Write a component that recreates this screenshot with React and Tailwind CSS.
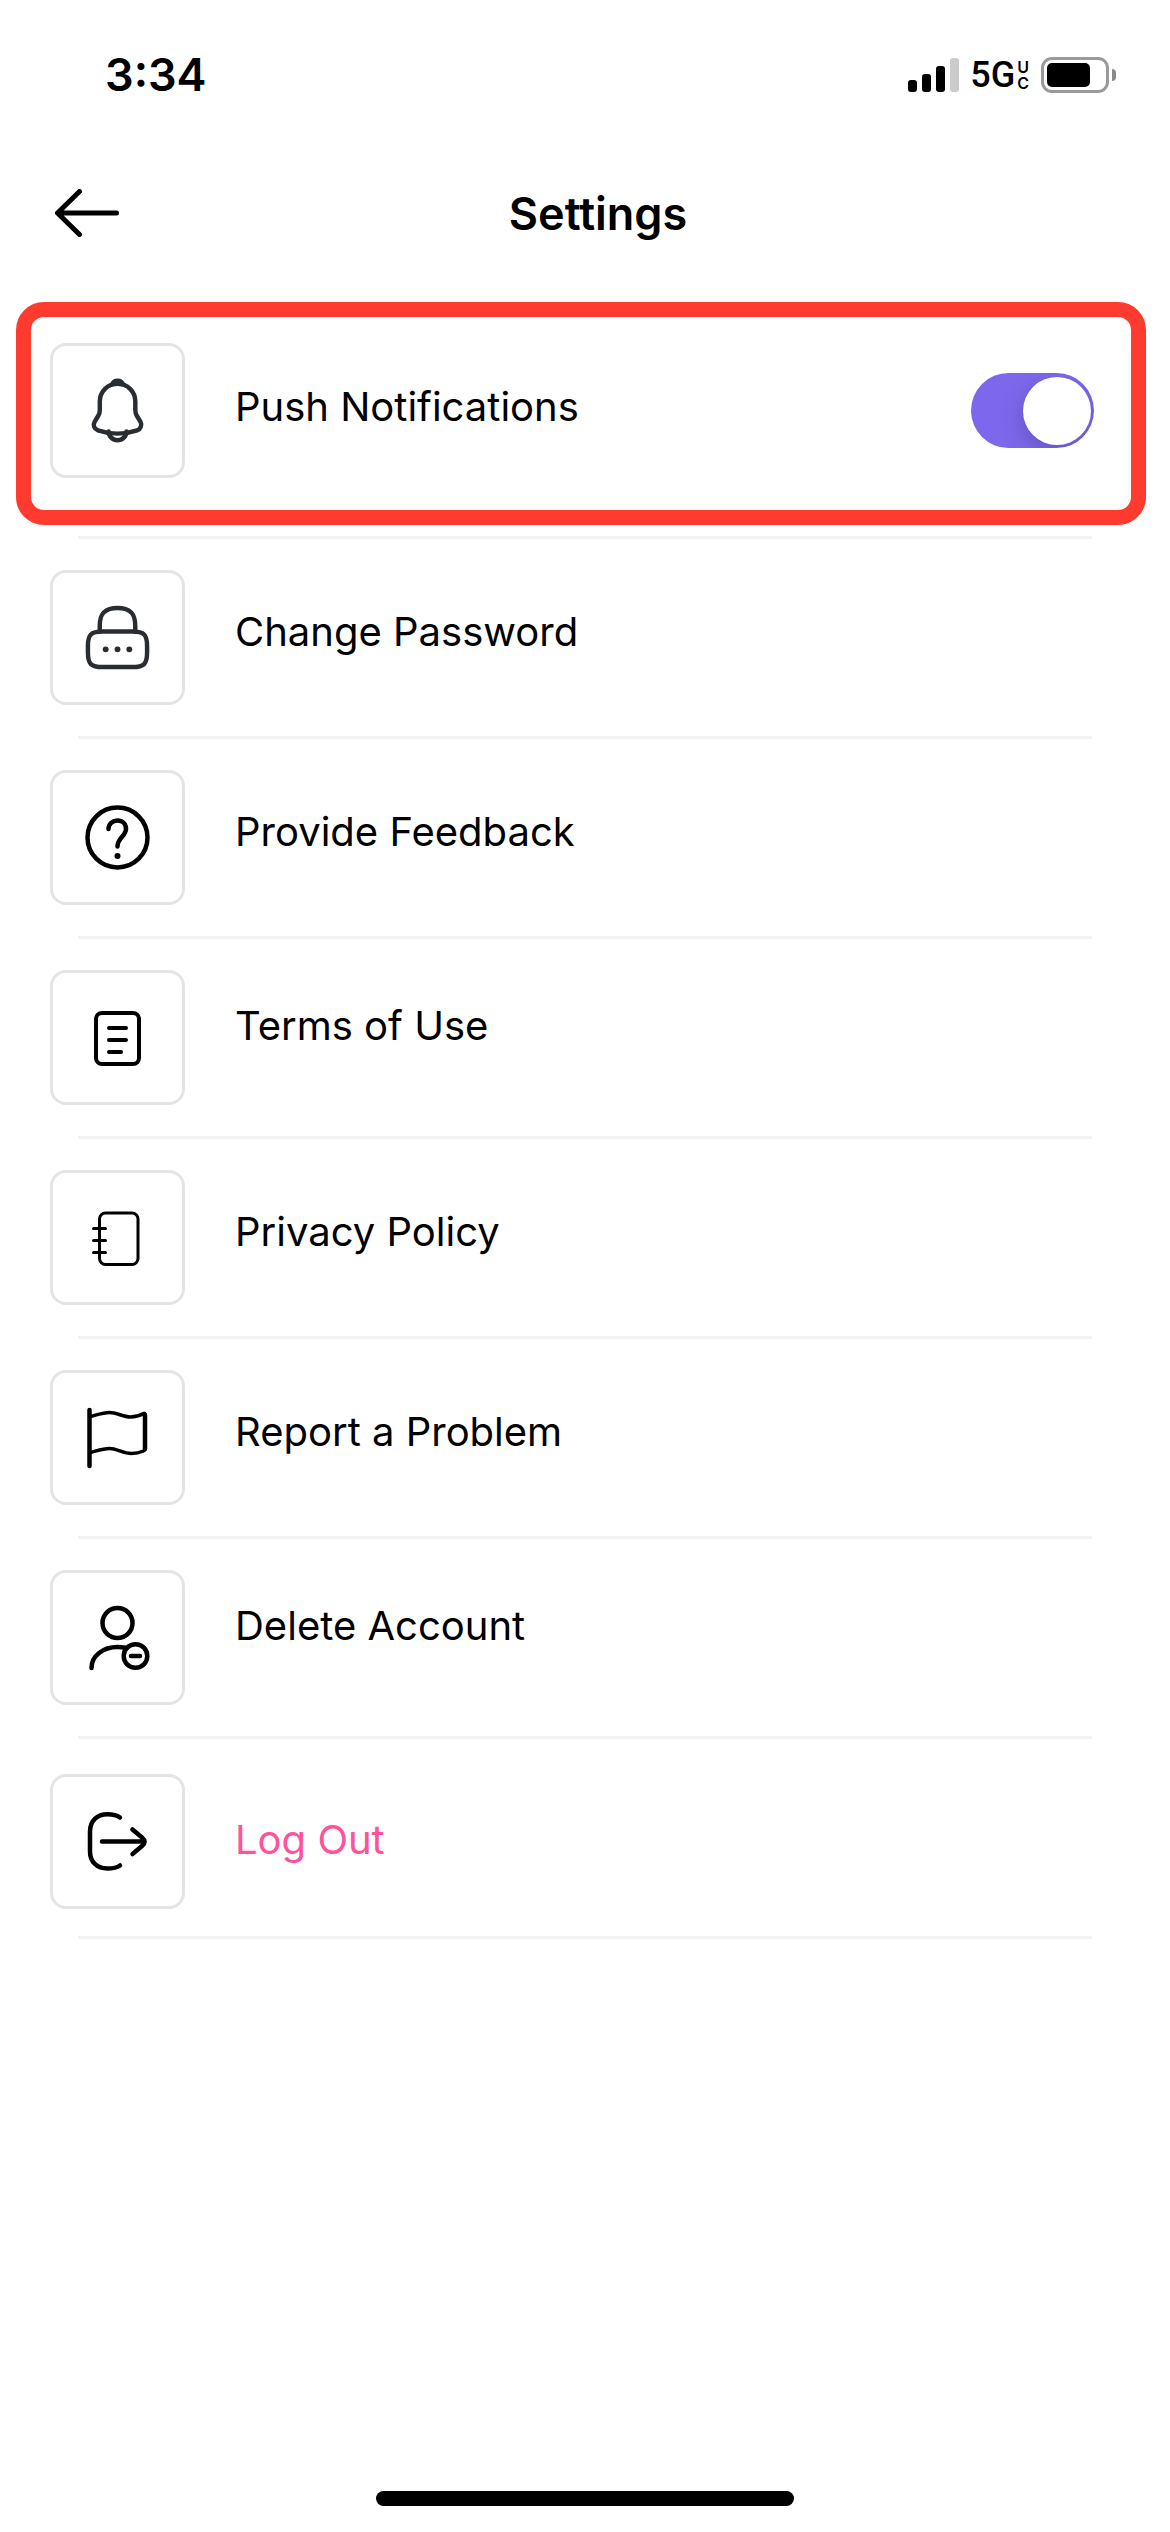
import React, { useState } from "react";

const ICON = "size-[71px] shrink-0";

function BellIcon() {
  return (
    <svg className={ICON} viewBox="0 0 24 24" fill="none" stroke="#292D32" strokeWidth="1.5" strokeLinecap="round">
      <path d="M12.02 2.91c-3.31 0-6 2.69-6 6v2.89c0 .61-.26 1.54-.57 2.06L4.3 15.77c-.71 1.18-.22 2.49 1.08 2.93 4.31 1.44 8.96 1.44 13.27 0 1.21-.4 1.74-1.83 1.08-2.93l-1.15-1.91c-.3-.52-.56-1.45-.56-2.06V8.91c0-3.3-2.7-6-6-6z" />
      <path d="M13.87 3.2a6.754 6.754 0 0 0-3.7 0c.29-.74 1.01-1.26 1.85-1.26.84 0 1.56.52 1.85 1.26z" fill="#292D32" />
      <path d="M15.02 19.06c0 1.65-1.35 3-3 3-.82 0-1.58-.34-2.12-.88a3.01 3.01 0 0 1-.88-2.12" />
    </svg>
  );
}

function LockIcon() {
  return (
    <svg className={ICON} viewBox="0 0 24 24" fill="none" stroke="#292D32" strokeWidth="1.5" strokeLinecap="round" strokeLinejoin="round">
      <path d="M6 10V8c0-3.31 1-6 6-6s6 2.69 6 6v2" />
      <path d="M17 22H7c-4 0-5-1-5-5v-2c0-4 1-5 5-5h10c4 0 5 1 5 5v2c0 4-1 5-5 5z" />
      <path d="M15.996 16h.009M11.995 16h.01M7.995 16h.008" strokeWidth="2" />
    </svg>
  );
}

function QuestionIcon() {
  return (
    <svg className={ICON} viewBox="0 0 71 71" fill="none" stroke="black" strokeWidth="4.5" strokeLinecap="round">
      <circle cx="35.5" cy="35.5" r="30" />
      <path d="M26.5 27C26.5 22 30.5 18.5 35.5 18.5 40.5 18.5 44 22 44 27 44 34 35.5 36 35.5 44.5" />
      <circle cx="35.5" cy="54" r="3" fill="black" stroke="none" />
    </svg>
  );
}

function DocumentIcon() {
  return (
    <svg className={ICON} viewBox="0 0 71 71" fill="none" stroke="black" strokeWidth="4" strokeLinecap="round">
      <rect x="14" y="11" width="43" height="51" rx="6" />
      <path d="M27 26h17M27 38h17M27 50h12" />
    </svg>
  );
}

function NotebookIcon() {
  return (
    <svg className={ICON} viewBox="0 0 71 71" fill="none" stroke="black" strokeWidth="3" strokeLinecap="round">
      <rect x="17.5" y="11" width="38.5" height="51.5" rx="6" />
      <path d="M11.5 26.5h12M11.5 38.5h12M11.5 50.5h12" />
    </svg>
  );
}

function FlagIcon() {
  return (
    <svg className={ICON} viewBox="0 0 71 71" fill="none" stroke="black" strokeWidth="3.5" strokeLinecap="round" strokeLinejoin="round">
      <path d="M7.5 8v56" strokeWidth="4.5" />
      <path d="M8.5 14.5C16 12.5 22 10.5 27.5 10.5 35 10.5 41 15 48.5 15 54 15 58 13.5 61.5 11.5 62.5 11 63 11.5 63 12.5V46.5C63 48 62.5 48.5 61.5 49 58 50.5 54 51.5 49.5 51.5 41 51.5 35 46.5 27.5 46.5 21 46.5 16 48.5 8.5 50.5" />
      <path d="M63 13v34" strokeWidth="4.5" />
    </svg>
  );
}

function UserMinusIcon() {
  return (
    <svg className={ICON} viewBox="0 0 71 71" fill="none" stroke="black" strokeWidth="4.5" strokeLinecap="round">
      <circle cx="35.5" cy="21" r="15" />
      <path d="M9.5 66C9.5 54 21 45 35.5 45 39 45 42 45.5 45 46" />
      <circle cx="53.5" cy="54" r="11.8" />
      <path d="M49 54h9" />
    </svg>
  );
}

function LogoutIcon() {
  return (
    <svg className={ICON} viewBox="0 0 71 71" fill="none" stroke="black" strokeWidth="4.5" strokeLinecap="round" strokeLinejoin="round">
      <path d="M38 11.5C34.5 9 30 8.3 25.5 8.3 15 8.3 8 15 8 25.5V45.5C8 56 15 62.5 25.5 62.5 30 62.5 34.5 62 38 59.5" />
      <path d="M20 35.5h41M50.5 23.5L60 31.5C63.5 34.5 63.5 37 60 40L50.5 48" />
    </svg>
  );
}

const items = [
  { label: "Change Password", icon: LockIcon },
  { label: "Provide Feedback", icon: QuestionIcon },
  { label: "Terms of Use", icon: DocumentIcon, raised: true },
  { label: "Privacy Policy", icon: NotebookIcon },
  { label: "Report a Problem", icon: FlagIcon },
  { label: "Delete Account", icon: UserMinusIcon, raised: true },
];

function IconBox({ children }) {
  return (
    <span className="flex size-[135px] shrink-0 items-center justify-center rounded-2xl border-3 border-[#e5e4e4]">
      {children}
    </span>
  );
}

function Divider() {
  return <div className="mx-[78px] h-[3px] bg-[#f2f2f2]" />;
}

function StatusBar() {
  return (
    <div className="flex h-[149px] items-center justify-between pr-[54px] pl-[105px]">
      <span className="text-[45px] leading-none font-semibold">3:34</span>
      <div className="flex items-center">
        <div className="flex h-[34px] items-end gap-[5px]">
          <span className="h-3 w-[9px] rounded-[3px] bg-black" />
          <span className="h-[18px] w-[9px] rounded-[3px] bg-black" />
          <span className="h-[26px] w-[9px] rounded-[3px] bg-black" />
          <span className="h-[34px] w-[9px] rounded-[3px] bg-[#cbcbcb]" />
        </div>
        <span className="ml-[11px] font-[Roboto,sans-serif] text-[36px] leading-none font-medium">5G</span>
        <span className="ml-[2px] flex flex-col text-[16px] leading-4 font-semibold">
          <span>U</span>
          <span>C</span>
        </span>
        <span className="ml-3 flex h-9 w-[68px] items-center rounded-[11px] border-3 border-[#9a9a9a] pl-[3px]">
          <span className="h-6 w-[43px] rounded-[5px] bg-black" />
        </span>
        <span className="ml-[3px] h-3 w-1 rounded-r-full bg-[#8a8a8a]" />
      </div>
    </div>
  );
}

export default function App() {
  const [pushEnabled, setPushEnabled] = useState(true);

  return (
    <div className="flex min-h-screen flex-col bg-white font-[Inter,sans-serif] text-black">
      <StatusBar />

      {/* Header */}
      <header className="flex h-32 items-center pr-[93px] pl-[55px]">
        <button type="button" aria-label="Back">
          <svg className="h-12 w-16" viewBox="0 0 64 48" fill="none" stroke="black" strokeWidth="5" strokeLinecap="round" strokeLinejoin="round">
            <path d="M61.5 24H3M24.5 2.5L2.5 24l22 21.5" />
          </svg>
        </button>
        <h1 className="flex-1 text-center text-[45px] leading-none font-semibold">Settings</h1>
      </header>

      <main>
        {/* Push notifications, highlighted */}
        <section className="mt-[25px] mr-6 mb-[11px] ml-4 flex items-center rounded-[28px] border-[15px] border-[#ff3b30] pt-[26px] pr-[37px] pb-8 pl-[19px]">
          <IconBox>
            <BellIcon />
          </IconBox>
          <label htmlFor="push" className="flex-1 pb-2 pl-[50px] text-[40px] leading-[48px]">
            Push Notifications
          </label>
          <input
            id="push"
            type="checkbox"
            role="switch"
            checked={pushEnabled}
            onChange={(e) => setPushEnabled(e.target.checked)}
            className="flex h-[75px] w-[123px] shrink-0 appearance-none items-center overflow-hidden rounded-full bg-gray-300 px-[3px] before:size-[68px] before:rounded-full before:bg-white before:shadow-[0_8px_24px_rgba(0,0,0,0.2)] checked:justify-end checked:bg-[#7d68ed]"
          />
        </section>
        <Divider />

        {/* Menu */}
        {items.map(({ label, icon: Icon, raised }) => (
          <div key={label}>
            <button type="button" className="flex w-full items-center px-[50px] py-[31px] text-left">
              <IconBox>
                <Icon />
              </IconBox>
              <span className={`pl-[50px] text-[40px] leading-[48px] ${raised ? "pb-6" : "pb-3"}`}>{label}</span>
            </button>
            <Divider />
          </div>
        ))}

        <button type="button" className="flex w-full items-center px-[50px] pt-[35px] pb-[27px] text-left">
          <IconBox>
            <LogoutIcon />
          </IconBox>
          <span className="pb-1 pl-[50px] text-[40px] leading-[48px] text-[#ff529b]">Log Out</span>
        </button>
        <Divider />
      </main>

      {/* Home indicator */}
      <div className="mt-auto flex justify-center pb-[26px]">
        <div className="h-[15px] w-[418px] rounded-full bg-black" />
      </div>
    </div>
  );
}
